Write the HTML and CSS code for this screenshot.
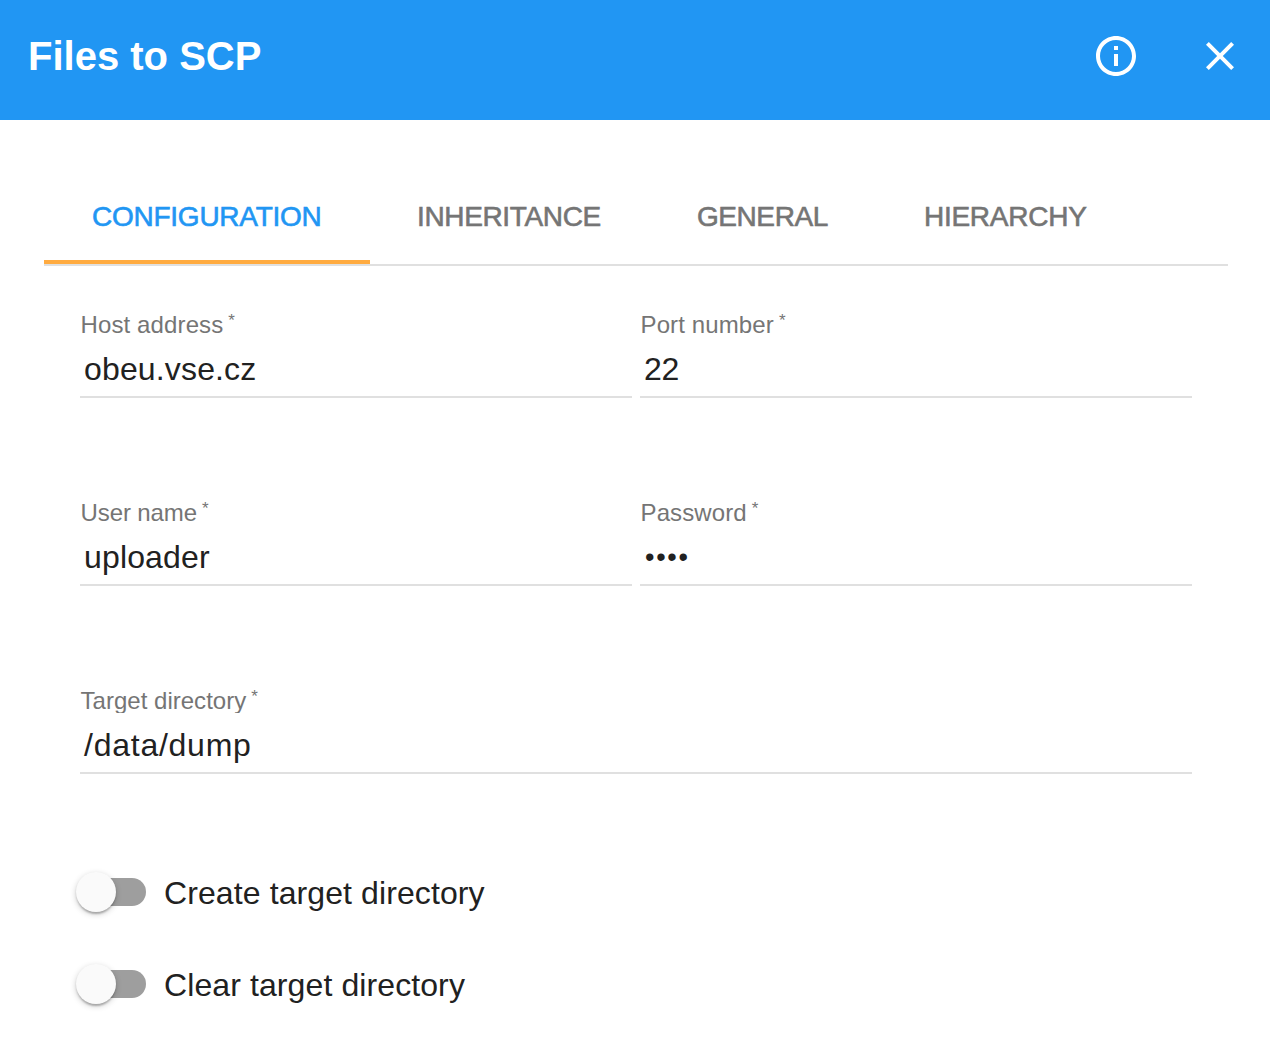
FILE: index.html
```html
<!DOCTYPE html>
<html lang="en">
<head>
<meta charset="utf-8">
<title>Files to SCP</title>
<link rel="stylesheet" href="styles.css">
</head>
<body>
<header class="toolbar">
  <h1 class="title">Files to SCP</h1>
  <button class="icon-button" aria-label="Information">
    <svg viewBox="0 0 24 24"><path d="M11 17h2v-6h-2v6zm1-15C6.48 2 2 6.48 2 12s4.48 10 10 10 10-4.48 10-10S17.52 2 12 2zm0 18c-4.41 0-8-3.59-8-8s3.59-8 8-8 8 3.59 8 8-3.59 8-8 8zM11 9h2V7h-2v2z"/></svg>
  </button>
  <button class="icon-button" aria-label="Close">
    <svg viewBox="0 0 24 24"><path d="M19 6.41L17.59 5 12 10.59 6.41 5 5 6.41 10.59 12 5 17.59 6.41 19 12 13.41 17.59 19 19 17.59 13.41 12z"/></svg>
  </button>
</header>
<main class="content">
  <nav class="tabs">
    <a class="tab tab-configuration active">CONFIGURATION</a>
    <a class="tab tab-inheritance">INHERITANCE</a>
    <a class="tab tab-general">GENERAL</a>
    <a class="tab tab-hierarchy">HIERARCHY</a>
  </nav>
  <form class="form">
    <div class="row">
      <div class="field"><div class="label">Host address<span class="required">*</span></div><div class="value">obeu.vse.cz</div></div>
      <div class="field"><div class="label">Port number<span class="required">*</span></div><div class="value number">22</div></div>
    </div>
    <div class="row">
      <div class="field"><div class="label label-user">User name<span class="required">*</span></div><div class="value">uploader</div></div>
      <div class="field"><div class="label">Password<span class="required">*</span></div><div class="value password">••••</div></div>
    </div>
    <div class="row">
      <div class="field"><div class="label label-target">Target directory<span class="required">*</span></div><div class="value path">/data/dump</div></div>
    </div>
    <div class="switches">
      <div class="switch"><span class="track"><span class="thumb"></span></span><span class="switch-label">Create target directory</span></div>
      <div class="switch"><span class="track"><span class="thumb"></span></span><span class="switch-label">Clear target directory</span></div>
    </div>
  </form>
</main>
</body>
</html>
```
FILE: styles.css
```css
* { box-sizing: border-box; }

body {
  margin: 0;
  min-height: 100vh;
  background: #fff;
  color: #212121;
  font-family: "Liberation Sans", Arial, sans-serif;
}

.toolbar {
  display: flex;
  gap: 56px;
  height: 120px;
  padding: 32px 26px 0 28px;
  background: #2196f3;
  color: #fff;
}

.title {
  flex: 1;
  margin: 0;
  font-size: 40px;
  font-weight: 700;
  line-height: 48px;
  letter-spacing: 0;
}

.icon-button {
  width: 48px;
  height: 48px;
  padding: 0;
  border: 0;
  background: none;
}

.icon-button svg {
  display: block;
  width: 48px;
  height: 48px;
  fill: #fff;
}

.content { padding: 48px 42px 40px 44px; }

.tabs {
  display: flex;
  height: 98px;
  border-bottom: 2px solid #e0e0e0;
}

.tab {
  height: 96px;
  padding: 1px 48px 0;
  border-bottom: 4px solid transparent;
  font-size: 28px;
  line-height: 96px;
  color: #757575;
  -webkit-text-stroke: 0.6px currentColor;
}

.tab.active { color: #2196f3; border-bottom-color: #ffab40; }
.tab-configuration { width: 326px; letter-spacing: -0.25px; }
.tab-inheritance { padding-left: 47px; letter-spacing: -0.35px; }
.tab-general { letter-spacing: -0.4px; }
.tab-hierarchy { letter-spacing: -0.25px; }

.form { padding: 43px 36px 0; }

.row {
  display: flex;
  gap: 8px;
  margin-bottom: 99px;
}

.field {
  flex: 1;
  height: 89px;
  border-bottom: 2px solid #e0e0e0;
}

.label {
  height: 28px;
  padding-left: 0.5px;
  overflow: hidden;
  font-size: 24px;
  line-height: 31px;
  letter-spacing: 0.12px;
  color: #757575;
}

.label-user { letter-spacing: -0.1px; }
.label-target { letter-spacing: 0.02px; }

.required {
  display: inline-block;
  margin-left: 5px;
  font-size: 17px;
  line-height: 18px;
  vertical-align: 7px;
}

.value {
  padding: 8px 4px 0;
  font-size: 32px;
  line-height: 48px;
  letter-spacing: 0.15px;
}

.number { letter-spacing: -0.3px; }

.password {
  padding-left: 5px;
  font-size: 27px;
  letter-spacing: 1.7px;
}

.path { letter-spacing: 0.75px; }

.switches {
  display: flex;
  flex-direction: column;
  gap: 52px;
  margin-top: -1px;
}

.switch {
  display: flex;
  align-items: center;
  gap: 18px;
  height: 40px;
  font-size: 32px;
  line-height: 40px;
  letter-spacing: 0.1px;
}

.switch-label { padding-top: 2px; }

.track {
  display: flex;
  align-items: center;
  width: 68px;
  height: 28px;
  margin-left: -2px;
  border-radius: 14px;
  background: #9e9e9e;
}

.thumb {
  flex: none;
  width: 40px;
  height: 40px;
  margin-left: -2px;
  border-radius: 50%;
  background: #fafafa;
  box-shadow: 0 2px 6px rgba(0, 0, 0, 0.2), 0 2px 2px rgba(0, 0, 0, 0.14), 0 4px 2px -2px rgba(0, 0, 0, 0.12);
}
```
